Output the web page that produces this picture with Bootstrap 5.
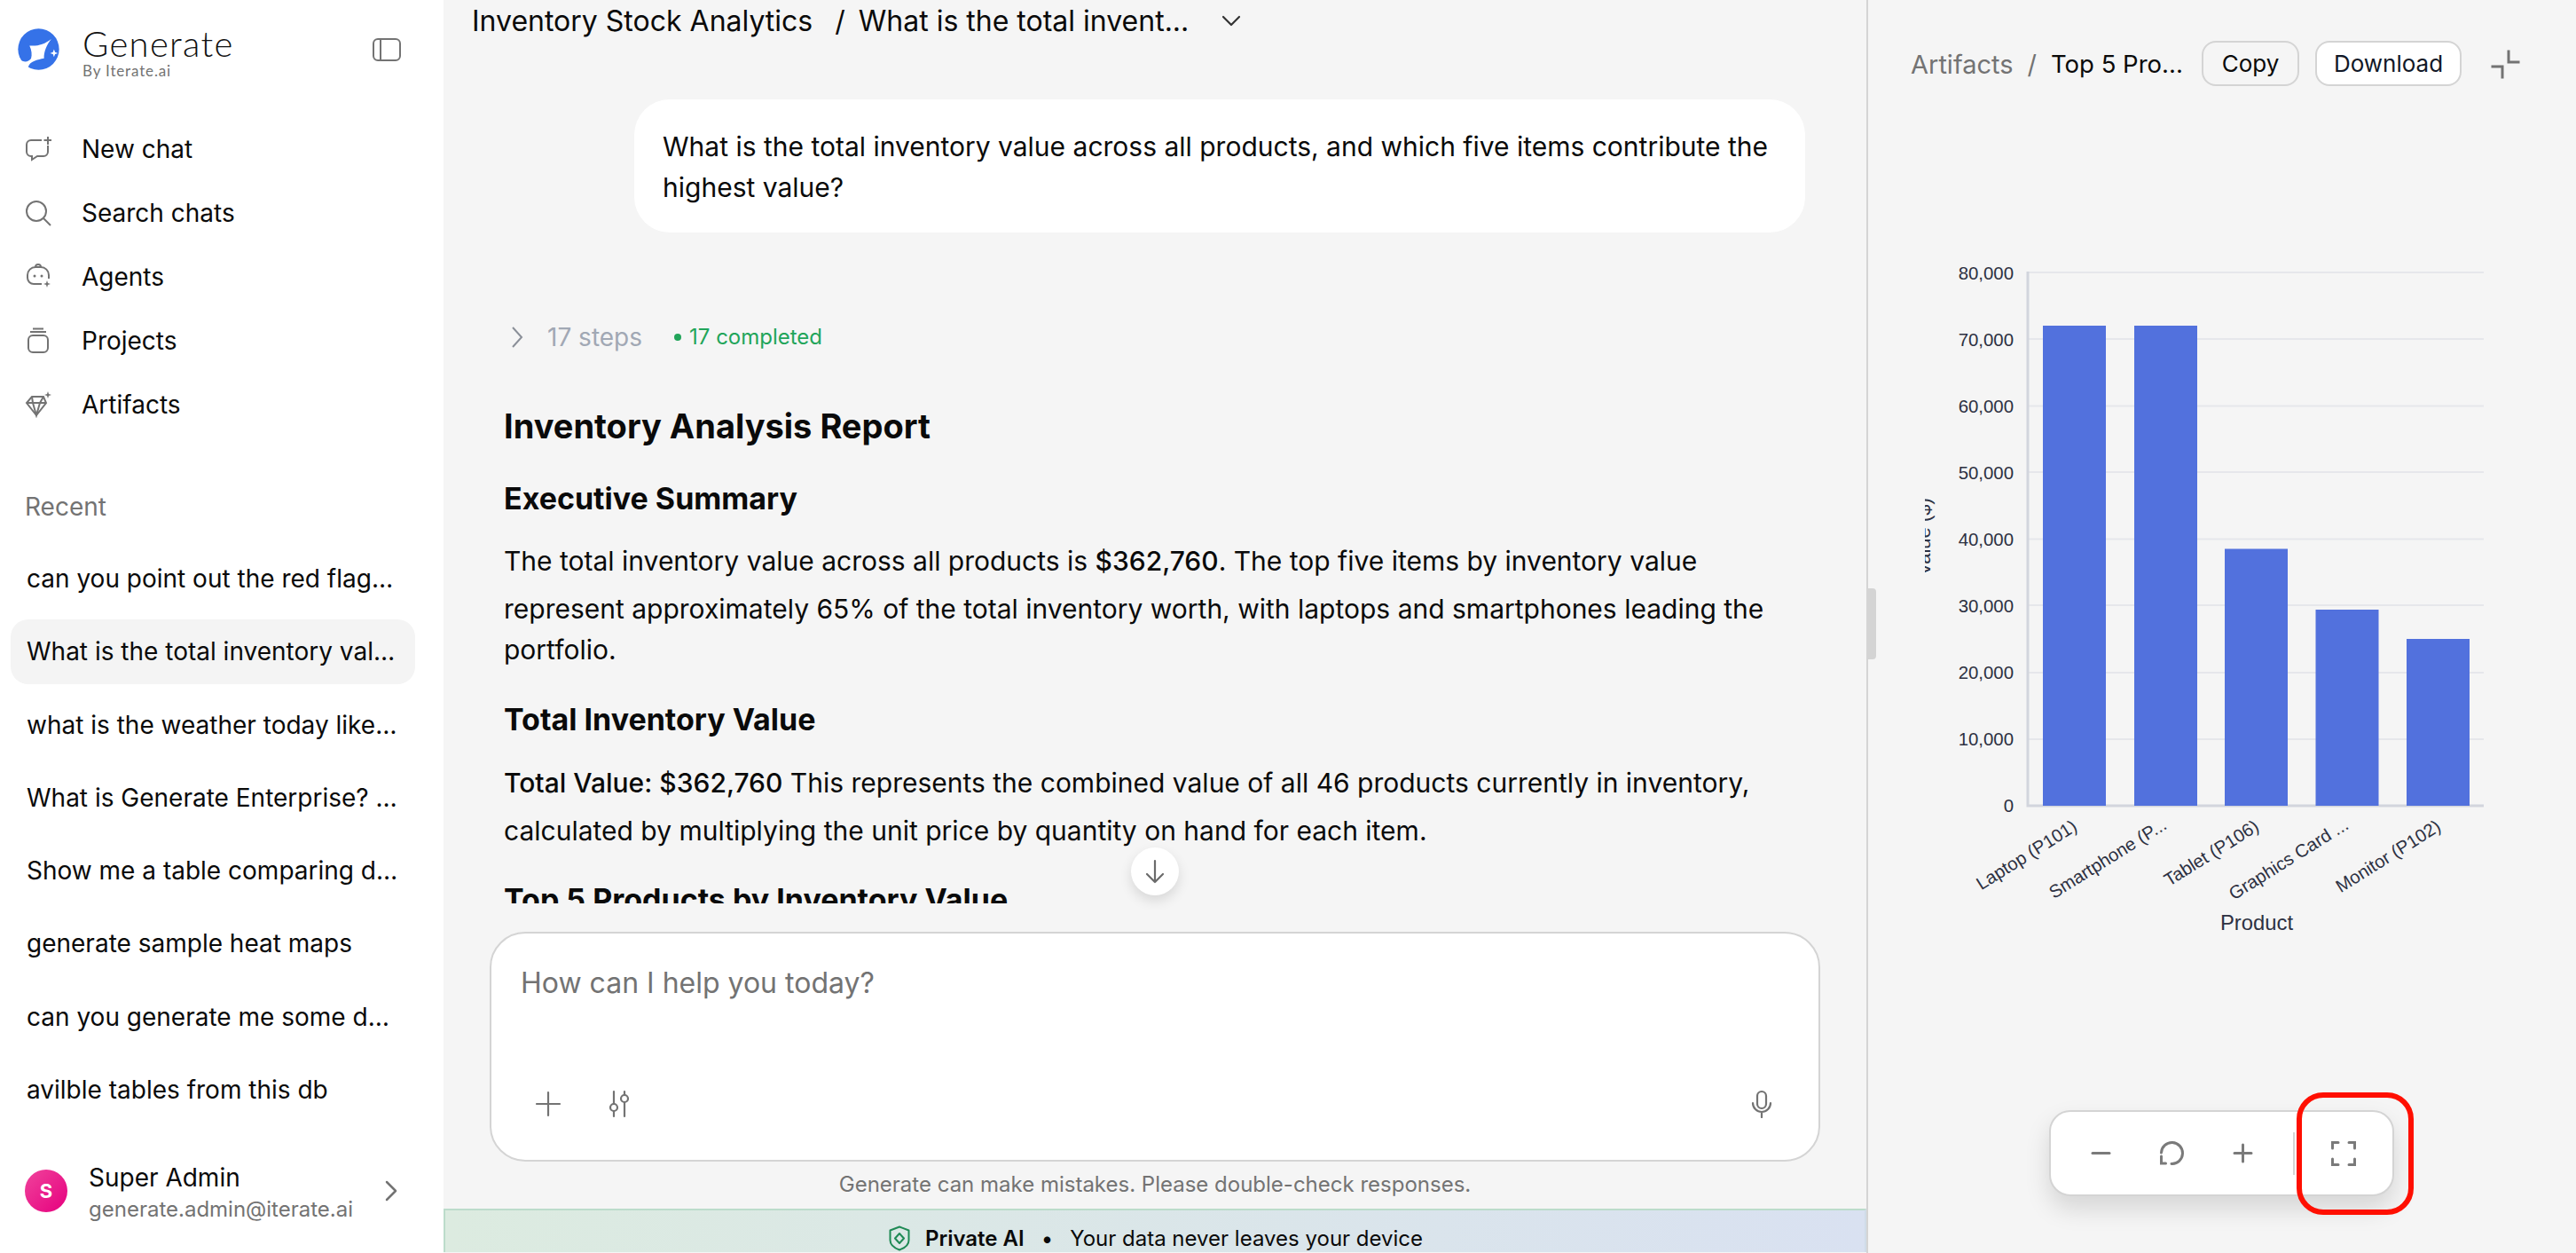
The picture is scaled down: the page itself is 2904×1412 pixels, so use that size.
<!DOCTYPE html>
<html lang="en">
<head>
<meta charset="utf-8">
<title>Generate</title>
<link href="https://cdn.jsdelivr.net/npm/bootstrap@5.3.0/dist/css/bootstrap.min.css" rel="stylesheet">
<style>
html,body{height:1412px;overflow:hidden;}
body{font-family:Inter,"Liberation Sans",sans-serif;color:#0a0a0a;background:#f5f5f5;font-size:30px;}
.app-shell{width:2904px;height:1412px;}
.side{width:500px;height:1412px;background:#fff;flex:none;}
.side-head{height:132px;padding:32px 48px 0 20px;}
.logo-mark{width:47px;height:47px;flex:none;}
.brand-box{margin-left:26px;margin-top:-3px;}
.brand-name{font-family:Lato,"Noto Sans",sans-serif;font-size:40px;line-height:40px;font-weight:300;letter-spacing:1.3px;color:#111;}
.brand-sub{font-family:Lato,sans-serif;font-size:17px;line-height:20px;color:#737373;margin-top:1px;letter-spacing:.85px;}
.side-toggle{width:32px;height:26px;margin-top:11px;}
.nav-row{height:72px;padding-left:28px;color:#0a0a0a;font-size:28px;text-decoration:none;}
.nav-ico{width:30px;height:30px;margin-right:34px;flex:none;}
.recent-title{font-size:28px;color:#737373;padding-left:28px;height:40px;line-height:40px;margin-top:59px;margin-bottom:25px;}
.recent-list{padding:0 32px 0 12px;gap:9.3px;}
.recent-item{height:73px;line-height:73px;padding:0 18px;border-radius:20px;font-size:28px;color:#0a0a0a;background:transparent;border:0;white-space:nowrap;overflow:hidden;text-overflow:ellipsis;}
.recent-item.is-on{background:#f4f4f4;}
.user-row{height:140px;padding:0 52px 0 28px;}
.user-av{width:48px;height:48px;border-radius:50%;background:linear-gradient(135deg,#f0439c,#e6007e);color:#fff;font-size:22px;font-weight:700;flex:none;margin-right:24px;}
.user-text{margin-top:6px;}
.user-name{font-size:28px;line-height:35px;}
.user-mail{font-size:24px;line-height:35px;color:#737373;}
.main-pane{width:1604px;height:1412px;flex:none;background:#f5f5f5;position:relative;}
.crumb-top{height:48px;padding-left:32px;font-size:32px;line-height:48px;white-space:nowrap;flex:none;}
.crumb-sep{margin:0 15px 0 25px;}
.crumb-chev{margin-left:36px;}
.scroll-area{height:970px;flex:none;overflow:hidden;padding:0 64px 0 68px;}
.bubble{margin:64px 5px 0 147px;background:#fff;border-radius:40px;padding:30px 32px 28px;line-height:46px;font-size:30px;height:150px;}
.steps-row{height:40px;margin-top:98px;padding-left:8px;}
.steps-count{font-size:28px;color:#a1a8b4;margin-left:27px;}
.steps-dot{width:8px;height:8px;border-radius:50%;background:#22a55a;margin-left:36px;margin-right:9px;}
.steps-done{font-size:24px;color:#22a55a;}
.report h1{font-size:38px;font-weight:700;line-height:50px;margin:55px 0 0;}
.report h2{font-size:34px;font-weight:700;line-height:44px;margin:0;}
.report p{font-size:30px;line-height:46px;margin:0;}
.report strong{font-weight:500;line-height:62px;}
.gap-a{margin-top:35px!important;}
.gap-b{margin-top:17px!important;}
.gap-c{margin-top:34px!important;}
.gap-d{margin-top:18px!important;}
.gap-e{margin-top:33px!important;}
.down-fab{position:absolute;left:775px;top:955px;width:54px;height:54px;border-radius:50%;background:#fff;box-shadow:0 6px 14px rgba(0,0,0,.12);border:0;padding:0;}
.composer{margin:32px 52px 0;height:259px;flex:none;background:#fff;border:2px solid #d4d4d4;border-radius:40px;padding:0 30px;}
.composer-hint{font-size:32px;line-height:44px;color:#737373;margin:34px 0 0 3px;}
.composer-tools{margin-top:auto;margin-bottom:47px;padding:0 18px;}
.tool-ico{width:32px;height:32px;}
.disclaimer{height:53px;line-height:52px;text-align:center;font-size:24px;color:#737373;flex:none;}
.private-bar{height:49px;flex:none;background:linear-gradient(90deg,#dcebe0,#d9e1f1);border:2px solid #bcdccb;border-bottom:0;border-right-color:#d0dce8;font-size:24px;line-height:36px;padding:14px 0 0 2px;overflow:hidden;}
.private-bar b{font-weight:600;}
.shield-ico{width:24px;height:29px;margin:3px 17px 0 0;flex:none;}
.bar-dot{margin:0 19px;}
.art-pane{width:800px;height:1412px;flex:none;background:#f5f5f5;border-left:2px solid #d4d4d4;position:relative;}
.grip{position:absolute;left:0;top:663px;width:9px;height:80px;background:#d4d4d4;border-radius:0 4px 4px 0;}
.art-head{height:143px;padding:46px 0 0 48px;flex:none;}
.art-crumb{font-size:27.5px;white-space:nowrap;width:328px;height:51px;padding-top:2px;}
.art-crumb span{color:#737373;font-size:29px;}
.art-sep{margin:0 16px;}
.art-btn{height:51px;font-size:26px;border:2px solid #d4d4d4;border-radius:16px;color:#0a0a0a;padding:0;line-height:47px;}
.art-btn.b-copy{width:110px;background:#f5f5f5;margin-right:18px;}
.art-btn.b-dl{width:165px;background:#fff;color:#111827;}
.shrink-ico{width:34px;height:34px;margin-left:32px;margin-top:9px;}
.chart-wrap{width:800px;height:1000px;margin-left:-2px;flex:none;}
.chart-wrap text{font-family:"Liberation Sans",Arial,sans-serif;fill:#2d3142;}
.zoom-bar{position:absolute;left:204px;top:1251px;width:389px;height:97px;background:#fff;border:2px solid #d4d4d4;border-radius:24px;box-shadow:0 14px 28px rgba(0,0,0,.13);}
.zb-slot{height:93px;}
.zb-left{width:273px;}
.zb-icons{gap:53px;}
.zb-div{width:2px;height:48px;background:#d4d4d4;}
.red-mark{position:absolute;left:483px;top:1231px;width:132px;height:138px;border:6px solid #ff0f00;border-radius:30px;}
</style>
</head>
<body>
<div class="app-shell d-flex">
  <aside class="side d-flex flex-column">
    <div class="side-head d-flex align-items-start">
      <svg class="logo-mark" viewBox="26 28 138 138"><circle cx="95" cy="97" r="68" fill="#3572e8"/><path d="M137 63C115 80 90 88 65 85 72 100 74 115 70 128 60 140 48 142 30 130L34 160 62 166C58 150 66 135 113 127 112 105 122 82 137 63Z" fill="#fff"/><path d="M146 97l3.500 9.500 9.500 3.500-9.500 3.500-3.500 9.500-3.500-9.500-9.500-3.500 9.500-3.500Z" fill="#fff"/></svg>
      <div class="brand-box flex-grow-1">
        <div class="brand-name">Generate</div>
        <div class="brand-sub">By Iterate.ai</div>
      </div>
      <svg class="side-toggle" viewBox="0 0 32 26" fill="none" stroke="#737373" stroke-width="2"><rect x="1" y="1" width="30" height="24" rx="5"/><path d="M9 1v24"/></svg>
    </div>
    <nav class="nav flex-column">
      <a class="nav-row d-flex align-items-center" href="#"><svg class="nav-ico" viewBox="0 0 30 30" fill="none" stroke="#737373" stroke-width="2"><path d="M19 5H7a5 5 0 0 0-5 5v8a5 5 0 0 0 5 5h1v4l6-4h7a5 5 0 0 0 5-5v-7"/><path d="M26 1v9M21.500 5h9"/></svg>New chat</a>
      <a class="nav-row d-flex align-items-center" href="#"><svg class="nav-ico" viewBox="0 0 30 30" fill="none" stroke="#737373" stroke-width="2"><circle cx="13" cy="13" r="11"/><path d="M21 21l8 8"/></svg>Search chats</a>
      <a class="nav-row d-flex align-items-center" href="#"><svg class="nav-ico" viewBox="0 0 30 30" fill="none" stroke="#737373" stroke-width="2"><path d="M27 17v-4a9 9 0 0 0-9-9h-6a9 9 0 0 0-9 9v3a7 7 0 0 0 7 7h9"/><path d="M12 4a3 3 0 0 1 6 0"/><circle cx="11" cy="14" r="1.500" fill="#737373" stroke="none"/><circle cx="19" cy="14" r="1.500" fill="#737373" stroke="none"/><path d="M25 19l1 3 3 1-3 1-1 3-1-3-3-1 3-1Z" fill="#737373" stroke="none"/></svg>Agents</a>
      <a class="nav-row d-flex align-items-center" href="#"><svg class="nav-ico" viewBox="0 0 30 30" fill="none" stroke="#737373" stroke-width="2"><rect x="4" y="9" width="22" height="19" rx="5"/><path d="M6 5h18M9 1.500h12"/></svg>Projects</a>
      <a class="nav-row d-flex align-items-center" href="#"><svg class="nav-ico" viewBox="0 0 30 30" fill="none" stroke="#737373" stroke-width="2"><path d="M8 6h13l3 7-11 14L2 13Z"/><path d="M2 13h22M9 13l4 14 4-14M8 6l1 7M21 6l-4 7"/><path d="M26 0l1 3 3 1-3 1-1 3-1-3-3-1 3-1Z" fill="#737373" stroke="none"/></svg>Artifacts</a>
    </nav>
    <div class="recent-title">Recent</div>
    <div class="list-group recent-list">
      <div class="recent-item">can you point out the red flags in this</div>
      <div class="recent-item is-on">What is the total inventory value across</div>
      <div class="recent-item">what is the weather today like in</div>
      <div class="recent-item">What is Generate Enterprise? Tell me</div>
      <div class="recent-item">Show me a table comparing data across</div>
      <div class="recent-item">generate sample heat maps</div>
      <div class="recent-item">can you generate me some data for</div>
      <div class="recent-item">avilble tables from this db</div>
    </div>
    <div class="user-row d-flex align-items-center mt-auto">
      <div class="user-av d-flex align-items-center justify-content-center">S</div>
      <div class="user-text flex-grow-1">
        <div class="user-name">Super Admin</div>
        <div class="user-mail">generate.admin@iterate.ai</div>
      </div>
      <svg width="14" height="24" viewBox="0 0 14 24" fill="none" stroke="#737373" stroke-width="2.500" stroke-linecap="round" stroke-linejoin="round"><path d="M2 2l10 10L2 22"/></svg>
    </div>
  </aside>

  <main class="main-pane d-flex flex-column">
    <div class="crumb-top d-flex align-items-center">
      <span>Inventory Stock Analytics</span><span class="crumb-sep">/</span><span>What is the total invent...</span>
      <svg class="crumb-chev" width="24" height="14" viewBox="0 0 24 14" fill="none" stroke="#333" stroke-width="2.200" stroke-linecap="round" stroke-linejoin="round"><path d="M3 2l9 9 9-9"/></svg>
    </div>
    <div class="scroll-area">
      <div class="bubble">What is the total inventory value across all products, and which five items contribute the highest value?</div>
      <div class="steps-row d-flex align-items-center">
        <svg width="14" height="26" viewBox="0 0 14 26" fill="none" stroke="#8a8f98" stroke-width="2"><path d="M2 2l10 11L2 24"/></svg>
        <span class="steps-count">17 steps</span>
        <span class="steps-dot"></span>
        <span class="steps-done">17 completed</span>
      </div>
      <div class="report">
        <h1>Inventory Analysis Report</h1>
        <h2 class="gap-a">Executive Summary</h2>
        <p class="gap-b">The total inventory value across all products is <strong>$362,760</strong>. The top five items by inventory value represent approximately 65% of the total inventory worth, with laptops and smartphones leading the portfolio.</p>
        <h2 class="gap-c">Total Inventory Value</h2>
        <p class="gap-d"><strong>Total Value: $362,760</strong> This represents the combined value of all 46 products currently in inventory, calculated by multiplying the unit price by quantity on hand for each item.</p>
        <h2 class="gap-e">Top 5 Products by Inventory Value</h2>
      </div>
    </div>
    <button class="down-fab d-flex align-items-center justify-content-center" aria-label="Scroll down"><svg width="22" height="28" viewBox="0 0 22 28" fill="none" stroke="#6b6b6b" stroke-width="2.200" stroke-linecap="round" stroke-linejoin="round"><path d="M11 2v24M2 17l9 9 9-9"/></svg></button>
    <div class="composer d-flex flex-column">
      <div class="composer-hint">How can I help you today?</div>
      <div class="composer-tools d-flex align-items-center">
        <svg class="tool-ico" viewBox="0 0 32 32" fill="none" stroke="#737373" stroke-width="2.200" stroke-linecap="round"><path d="M16 3v26M3 16h26"/></svg>
        <svg class="tool-ico ms-5" viewBox="0 0 32 32" fill="none" stroke="#737373" stroke-width="2.200" stroke-linecap="round"><path d="M10 2v14M10 24v6M22 2v4M22 14v16"/><circle cx="10" cy="20" r="4"/><circle cx="22" cy="10" r="4"/></svg>
        <svg class="tool-ico ms-auto" viewBox="0 0 32 32" fill="none" stroke="#737373" stroke-width="2.200" stroke-linecap="round"><rect x="11" y="2" width="10" height="19" rx="5"/><path d="M6 15a10 10 0 0 0 20 0M16 25v6"/></svg>
      </div>
    </div>
    <div class="disclaimer">Generate can make mistakes. Please double-check responses.</div>
    <div class="private-bar d-flex justify-content-center align-items-start">
      <svg class="shield-ico" viewBox="0 0 24 29" fill="none" stroke="#1f8a55" stroke-width="2" stroke-linejoin="round"><path d="M12 1.500l10.500 4v11c0 5-5 9-10.500 11C6.500 25.500 1.500 21.500 1.500 16.500v-11Z"/><path d="M12 9l5 5.500-5 5.500-5-5.500Z"/></svg>
      <b>Private AI</b><span class="bar-dot">•</span><span>Your data never leaves your device</span>
    </div>
  </main>

  <section class="art-pane d-flex flex-column">
    <div class="grip"></div>
    <div class="art-head d-flex align-items-start">
      <div class="art-crumb d-flex align-items-center"><span>Artifacts</span><span class="art-sep">/</span>Top 5 Pro...</div>
      <button class="btn art-btn b-copy">Copy</button>
      <button class="btn art-btn b-dl">Download</button>
      <svg class="shrink-ico" viewBox="0 0 34 34" fill="none" stroke="#737373" stroke-width="3" stroke-linecap="square"><path d="M21 3v12h11M3 20h11v12"/></svg>
    </div>
    <div class="chart-wrap">
      <svg width="800" height="1000" viewBox="2104 143 800 1000">
        <defs><clipPath id="yclip"><rect x="2170" y="540" width="30" height="130"/></clipPath></defs>
        <g stroke="#e6e7eb" stroke-width="2">
          <path d="M2286 307H2800M2286 382H2800M2286 457.500H2800M2286 532H2800M2286 607.500H2800M2286 682H2800M2286 758H2800M2286 833H2800"/>
        </g>
        <path d="M2286 306V908H2800" fill="none" stroke="#d2d5dd" stroke-width="3"/>
        <g fill="#5271dd">
          <rect x="2303" y="367" width="71" height="541"/>
          <rect x="2406" y="367" width="71" height="541"/>
          <rect x="2508" y="618.500" width="71" height="289.500"/>
          <rect x="2610.500" y="687" width="71" height="221"/>
          <rect x="2713" y="720" width="71" height="188"/>
        </g>
        <g font-size="20.400" text-anchor="end">
          <text x="2270" y="315">80,000</text>
          <text x="2270" y="390">70,000</text>
          <text x="2270" y="465">60,000</text>
          <text x="2270" y="540">50,000</text>
          <text x="2270" y="615">40,000</text>
          <text x="2270" y="690">30,000</text>
          <text x="2270" y="765">20,000</text>
          <text x="2270" y="840">10,000</text>
          <text x="2270" y="915">0</text>
        </g>
        <g font-size="20.400" text-anchor="end">
          <text transform="translate(2343 935) rotate(-32)">Laptop (P101)</text>
          <text transform="translate(2444 933) rotate(-32)">Smartphone (P...</text>
          <text transform="translate(2548 935) rotate(-32)">Tablet (P106)</text>
          <text transform="translate(2649 933) rotate(-32)">Graphics Card ...</text>
          <text transform="translate(2753 935) rotate(-32)">Monitor (P102)</text>
        </g>
        <text x="2544" y="1048" font-size="23.800" text-anchor="middle">Product</text>
        <g clip-path="url(#yclip)"><text transform="translate(2176 605) rotate(-90)" font-size="22" text-anchor="middle">Value ($)</text></g>
      </svg>
    </div>
    <div class="zoom-bar d-flex align-items-center">
      <div class="zb-slot zb-left d-flex align-items-center justify-content-center">
        <div class="zb-icons d-flex align-items-center">
          <svg width="27" height="27" viewBox="0 0 27 27" fill="none" stroke="#7a7a7a" stroke-width="3" stroke-linecap="round"><path d="M4 13.500h19"/></svg>
          <svg width="27" height="27" viewBox="0 0 27 27" fill="none" stroke="#7a7a7a" stroke-width="3" stroke-linecap="round"><path d="M1.500 13A12 12 0 1 1 13 25.500M1.500 17v8h5"/></svg>
          <svg width="27" height="27" viewBox="0 0 27 27" fill="none" stroke="#7a7a7a" stroke-width="3" stroke-linecap="round"><path d="M13.500 4v19M4 13.500h19"/></svg>
        </div>
      </div>
      <div class="zb-div"></div>
      <div class="zb-slot flex-grow-1 d-flex align-items-center justify-content-center">
        <svg width="28" height="28" viewBox="0 0 28 28" fill="none" stroke="#7a7a7a" stroke-width="3" stroke-linecap="round"><path d="M1.500 8V1.500H8M20 1.500h6.500V8M1.500 20v6.500H8M20 26.500h6.500V20"/></svg>
      </div>
    </div>
    <div class="red-mark"></div>
  </section>
</div>
<script src="https://cdn.jsdelivr.net/npm/bootstrap@5.3.0/dist/js/bootstrap.bundle.min.js"></script>
</body>
</html>
